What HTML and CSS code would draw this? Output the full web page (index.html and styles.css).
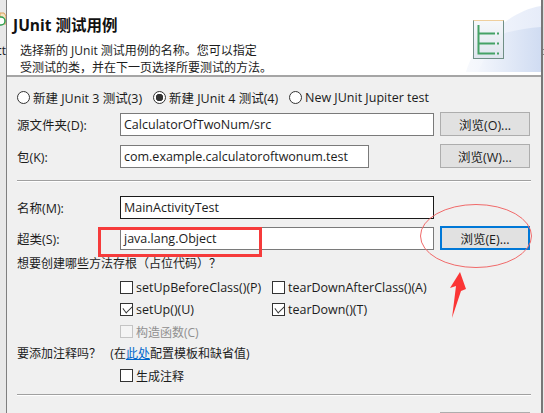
FILE: index.html
```html
<!DOCTYPE html>
<html lang="zh">
  <head>
    <meta charset="utf-8" />
    <title>JUnit 测试用例</title>
    <link rel="stylesheet" href="styles.css">
  </head>
  <body>
    <div class="strip strip-left">
      <svg class="strip-icon" width="6" height="16" viewBox="0 0 6 16">
        <path d="M0 1h4l2 3v8H0z" fill="#f4e3c4" stroke="#dba25a" />
        <circle cx="1" cy="9" r="4" fill="#fff" stroke="#2e9e4f" stroke-width="1.5" />
      </svg>
      <span class="strip-text">ct</span>
    </div>

    <main class="dialog">
      <header class="banner">
        <svg class="watermark" width="75" height="66" viewBox="0 0 75 66">
          <defs>
            <linearGradient id="wm-outer" x1="0" y1="0" x2="1" y2="0">
              <stop offset="0" stop-color="#f7f9fd" />
              <stop offset="1" stop-color="#e6ecf9" />
            </linearGradient>
            <linearGradient id="wm-inner" x1="0" y1="0" x2="1" y2="0">
              <stop offset="0" stop-color="#f3f6fc" />
              <stop offset="1" stop-color="#d0dcf2" />
            </linearGradient>
          </defs>
          <path d="M0 66C8 40 24 24 39 16C50 8 62 2 75 0V66Z" fill="url(#wm-outer)" />
          <path d="M12 66C20 48 30 32 39 27C50 24 62 22 75 21V66Z" fill="url(#wm-inner)" />
        </svg>
        <div class="banner-text">
          <h1>JUnit 测试用例</h1>
          <p>选择新的 JUnit 测试用例的名称。您可以指定<br />受测试的类，并在下一页选择所要测试的方法。</p>
        </div>
        <div class="wizard-icon">
          <svg width="31" height="39" viewBox="0 0 31 39">
            <defs>
              <linearGradient id="icon-bg" x1="0" y1="0" x2="0" y2="1">
                <stop offset="0" stop-color="#f6f8fb" />
                <stop offset="1" stop-color="#dfe5ee" />
              </linearGradient>
            </defs>
            <rect x="0.5" y="0.5" width="30" height="38" fill="url(#icon-bg)" stroke="#6f8f86" />
            <path d="M0.5 0.5H30.5" stroke="#efcf9e" />
            <path d="M5.5 5V34.5M5.5 13.5H22M5.5 23.5H22M5.5 33.5H22" fill="none" stroke="#45a266" stroke-width="2" />
            <path d="M24 13.5H26M24 23.5H26M24 33.5H26" fill="none" stroke="#45a266" stroke-width="2" />
          </svg>
        </div>
      </header>

      <section class="form">
        <div class="radio-row">
          <label class="choice"><span class="radio"></span>新建 JUnit 3 测试(3)</label>
          <label class="choice"><span class="radio on"></span>新建 JUnit 4 测试(4)</label>
          <label class="choice"><span class="radio"></span>New JUnit Jupiter test</label>
        </div>

        <div class="row">
          <span class="label">源文件夹(D):</span>
          <div class="field">CalculatorOfTwoNum/src</div>
          <button class="browse">浏览(O)...</button>
        </div>
        <div class="row">
          <span class="label">包(K):</span>
          <div class="field short">com.example.calculatoroftwonum.test</div>
          <button class="browse">浏览(W)...</button>
        </div>

        <hr class="rule rule-a" />

        <div class="row row-name">
          <span class="label">名称(M):</span>
          <div class="field active">MainActivityTest</div>
        </div>
        <div class="row row-super">
          <span class="label">超类(S):</span>
          <div class="field">java.lang.Object</div>
          <button class="browse focused">浏览(E)...</button>
        </div>

        <div class="question">想要创建哪些方法存根（占位代码）？</div>
        <div class="checks">
          <label class="choice"><span class="box"></span>setUpBeforeClass()(P)</label>
          <label class="choice"><span class="box"></span>tearDownAfterClass()(A)</label>
          <label class="choice"><span class="box checked"></span>setUp()(U)</label>
          <label class="choice"><span class="box checked"></span>tearDown()(T)</label>
          <label class="choice disabled"><span class="box"></span>构造函数(C)</label>
        </div>

        <div class="question question-b">要添加注释吗？&nbsp;&nbsp; (在<a href="#">此处</a>配置模板和缺省值)</div>
        <div class="checks checks-b">
          <label class="choice cjk"><span class="box"></span>生成注释</label>
        </div>

        <hr class="rule rule-b" />

        <div class="row">
          <span class="label"></span>
          <div class="field"></div>
          <button class="browse"></button>
        </div>
      </section>
    </main>

    <div class="strip strip-right"></div>

    <!-- red markup drawn over the dialog -->
    <div class="mark-rect"></div>
    <svg class="mark-ellipse" width="114" height="66" viewBox="0 0 114 66">
      <ellipse cx="57" cy="33" rx="55.5" ry="31.5" fill="none" stroke="#f06a6a" />
    </svg>
    <svg class="mark-arrow" width="20" height="50" viewBox="0 0 20 50">
      <path d="M12 1L18 18L13 20L4 47L8 15L2 17Z" fill="#fb3535" />
    </svg>
  </body>
</html>
```

FILE: styles.css
```css
* {
  box-sizing: border-box;
}
html,
body {
  height: 100%;
}
body {
  margin: 0;
  display: flex;
  overflow: hidden;
  font-family: "Open Sans", "Noto Sans CJK SC", sans-serif;
  font-size: 12.5px;
  color: #1c1c1c;
  background: #f0f0f0;
}
.strip {
  position: relative;
  flex: none;
}
.strip-left {
  width: 6px;
  background: #e8e8e8;
}
.strip-icon {
  position: absolute;
  left: 0;
  top: 12px;
}
.strip-text {
  position: absolute;
  left: -6px;
  top: 42px;
  width: 12px;
  font-size: 12px;
  text-align: right;
}
.strip-right {
  width: 1px;
  background: linear-gradient(#dcdcdc 49px, #888 49px, #888 50px, #dcdcdc 50px, #dcdcdc 54px, #888 54px, #888 55px, #e8e8e8 55px);
}
.dialog {
  width: 537px;
  flex: none;
  border-left: 1px solid #7f7f7f;
  border-right: 2px solid #777;
  overflow: hidden;
}
.banner {
  position: relative;
  height: 77px;
  display: flex;
  justify-content: space-between;
  border-bottom: 2px solid #a5a5a5;
  background: #fff;
}
.watermark {
  position: absolute;
  right: 0;
  bottom: 3px;
}
.banner-text {
  position: relative;
  padding: 14px 0 0 6px;
}
h1 {
  margin: 0;
  font-size: 15.5px;
  line-height: 22px;
  font-weight: 700;
  color: #111;
}
.banner p {
  margin: 6px 0 0 7px;
  font-size: 12px;
  line-height: 17px;
}
.wizard-icon {
  position: relative;
  padding: 20px 37px 0 0;
}
.form {
  padding: 0 10px;
}
.radio-row {
  height: 35px;
  padding-top: 5px;
  display: flex;
  align-items: center;
}
.radio-row .choice:nth-child(1) {
  width: 136px;
}
.radio-row .choice:nth-child(2) {
  width: 136px;
}
.choice {
  display: flex;
  align-items: center;
  gap: 3px;
  height: 17px;
  white-space: nowrap;
}
.radio {
  width: 13px;
  height: 13px;
  flex: none;
  border: 1px solid #333;
  border-radius: 50%;
  background: #fff;
}
.radio.on {
  background: radial-gradient(circle, #333 0, #333 3.5px, #fff 4px);
}
.row {
  display: grid;
  grid-template-columns: 97px 314px 90px;
  column-gap: 6px;
  align-items: center;
  height: 23px;
  margin-bottom: 9px;
}
.field {
  height: 23px;
  line-height: 21px;
  padding: 0 3px;
  border: 1px solid #7a7a7a;
  background: #fff;
  white-space: nowrap;
  overflow: hidden;
}
.field.short {
  width: 249px;
}
.field.active {
  border-color: #1a1a1a;
}
.browse {
  height: 24px;
  padding: 0;
  border: 1px solid #adadad;
  background: #e1e1e1;
  font: inherit;
  color: inherit;
}
.browse.focused {
  border: 2px solid #0078d7;
}
.rule {
  margin: 0;
  width: 514px;
  height: 2px;
  border: 0;
  background: linear-gradient(#a0a0a0 1px, #fff 1px);
}
.rule-a {
  margin: 13px 0 14px;
}
.rule-b {
  margin: 10px 0 16px;
}
.row-name {
  margin-bottom: 7px;
}
.row-super {
  margin-bottom: 6px;
}
.question {
  height: 17px;
  font-size: 12px;
  line-height: 17px;
}
.question a {
  color: #0066cc;
}
.checks {
  display: grid;
  grid-template-columns: 152px auto;
  row-gap: 5px;
  padding-left: 103px;
  margin-top: 7px;
}
.question-b {
  margin-top: 5px;
}
.checks-b {
  margin-top: 5px;
}
.cjk {
  font-size: 12px;
}
.box {
  position: relative;
  width: 13px;
  height: 13px;
  flex: none;
  border: 1px solid #333;
  background: #fff;
}
.box.checked::after {
  content: "";
  position: absolute;
  left: 2px;
  top: 1px;
  width: 8px;
  height: 5px;
  border-left: 1px solid #333;
  border-bottom: 1px solid #333;
  transform: rotate(-45deg) skewX(-8deg);
}
.disabled {
  font-size: 12px;
  color: #8f8f8f;
}
.disabled .box {
  border-color: #c4c4c4;
  background: #f4f4f4;
}
.mark-rect {
  position: absolute;
  left: 98px;
  top: 227px;
  width: 164px;
  height: 30px;
  border: 3px solid #f63b3b;
}
.mark-ellipse {
  position: absolute;
  left: 419px;
  top: 203px;
}
.mark-arrow {
  position: absolute;
  left: 448px;
  top: 271px;
}
```
